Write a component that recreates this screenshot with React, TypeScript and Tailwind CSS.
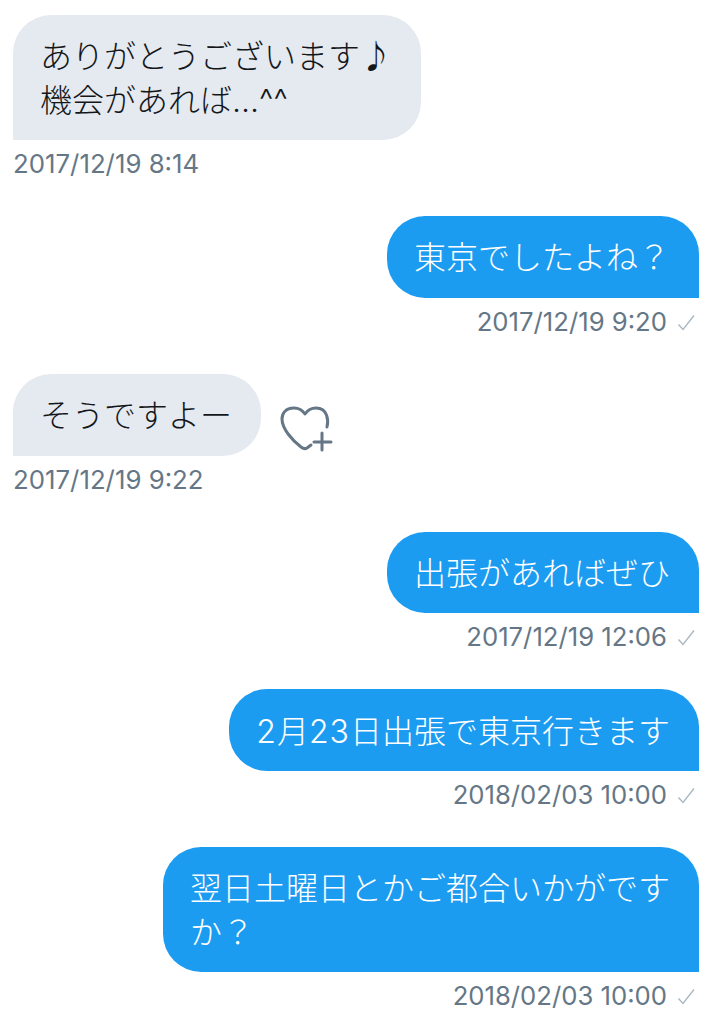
const cjk = "font-['Noto_Sans_CJK_JP',sans-serif] font-light";
const latin = "font-['Inter',sans-serif] font-light leading-none";
const digits = "font-['Inter',sans-serif] font-light leading-none tracking-[1px]";

function Check() {
  return (
    <svg width="18" height="18" viewBox="0 0 18 18" fill="none" className="text-[#aab8c2]">
      <path d="M1.5 10.5 L6 15.5 L17 1.5" stroke="currentColor" strokeWidth="1.4" />
    </svg>
  );
}

function HeartPlus() {
  return (
    <svg width="53" height="48" viewBox="0 0 53 48" fill="none" stroke="#657786" strokeWidth="3" strokeLinecap="round" strokeLinejoin="round">
      <path d="M47 23 C48.5 17 48 4 36 4 C30.5 4 27 7 25 10 C23 7 19.5 4 14 4 C5 4 2 10 2 15 C2 25 13 37 21 43 C23 44.5 25.5 45 27 44 L31 41" />
      <path d="M42 29 V46 M34 38 H51" />
    </svg>
  );
}

function Incoming({ text, time, react }: { text: React.ReactNode; time: string; react?: boolean }) {
  return (
    <div className="flex flex-col items-start pl-[13px]">
      <div className="flex items-start">
        <div className={`${cjk} w-fit bg-[#e5e9f0] text-[#14171a] text-[32px] leading-[43.25px] rounded-t-[38px] rounded-br-[38px] pl-[27px] pr-[29px] pt-[18.25px] pb-[20.25px]`}>
          {text}
        </div>
        {react && (
          <div className="ml-[19px] mt-[30px]">
            <HeartPlus />
          </div>
        )}
      </div>
      <div className="h-[76px] pt-[10px] text-[25.8px] leading-[28px] text-[#657786] font-['Inter',sans-serif]">{time}</div>
    </div>
  );
}

function Outgoing({ text, time }: { text: React.ReactNode; time: string }) {
  return (
    <div className="flex flex-col items-end pr-[12px]">
      <div className={`${cjk} w-fit max-w-[536px] bg-[#1c9cf1] text-white text-[32px] leading-[43.25px] rounded-t-[38px] rounded-bl-[38px] pl-[27px] pr-[29px] pt-[18.25px] pb-[20.25px]`}>
        {text}
      </div>
      <div className="h-[76px] pt-[10px] flex items-start gap-[10px] pr-[4px] text-[25.7px] leading-[28px] text-[#657786] font-['Inter',sans-serif]">
        <span>{time}</span>
        <span className="mt-[6px]">
          <Check />
        </span>
      </div>
    </div>
  );
}

export default function App() {
  return (
    <div className="w-[711px] h-[1024px] overflow-hidden bg-white pt-[15px]">
      <Incoming
        text={
          <>
            ありがとうございます♪
            <br />
            機会があれば<span className={latin}>...^^</span>
          </>
        }
        time="2017/12/19 8:14"
      />
      <Outgoing text="東京でしたよね？" time="2017/12/19 9:20" />
      <Incoming text="そうですよー" time="2017/12/19 9:22" react />
      <Outgoing text="出張があればぜひ" time="2017/12/19 12:06" />
      <Outgoing
        text={
          <>
            <span className={digits}>2</span>月<span className={digits}>23</span>日出張で東京行きます
          </>
        }
        time="2018/02/03 10:00"
      />
      <Outgoing text="翌日土曜日とかご都合いかがですか？" time="2018/02/03 10:00" />
    </div>
  );
}
